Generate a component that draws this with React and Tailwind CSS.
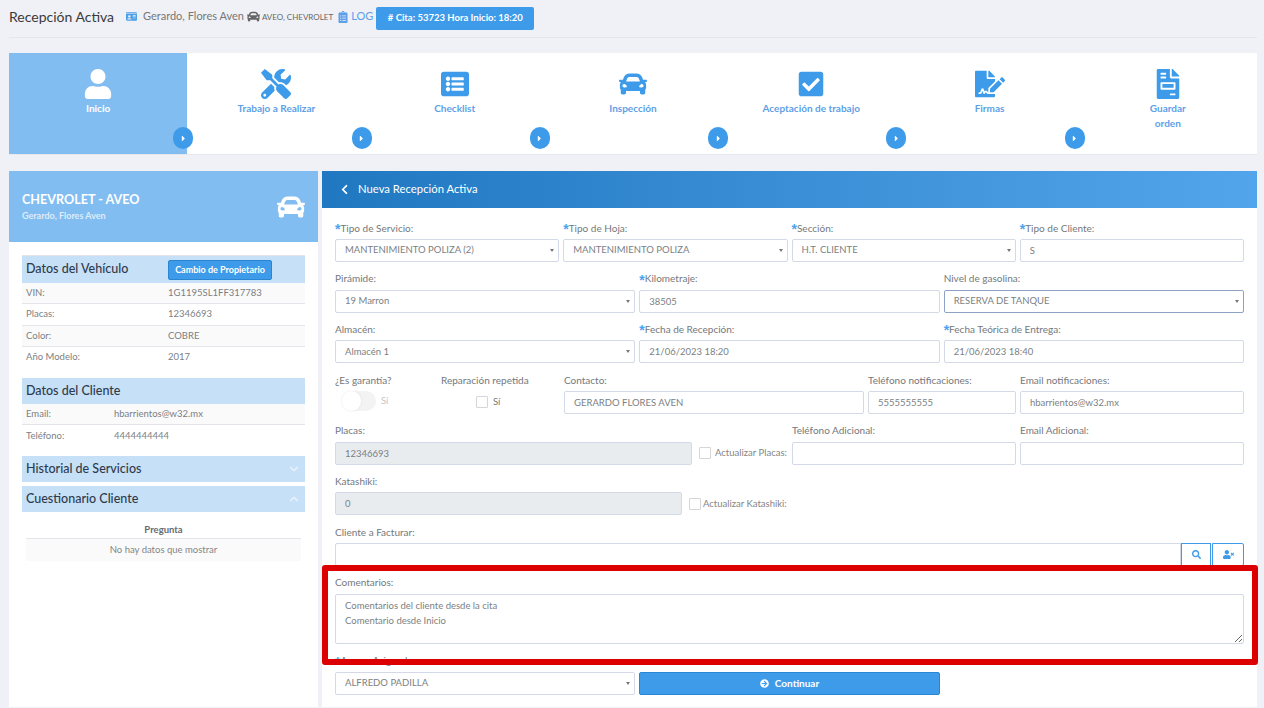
import React from "react";
import {
  FaUser, FaTools, FaListAlt, FaCar, FaCheckSquare, FaFileSignature, FaFileInvoice,
  FaCaretRight, FaChevronLeft, FaChevronDown, FaChevronUp, FaSearch, FaUserTimes,
  FaArrowCircleRight, FaIdCard, FaClipboardList,
} from "react-icons/fa";

const steps = [
  { label: "Inicio", icon: <FaUser size={30} />, active: true },
  { label: "Trabajo a Realizar", icon: <FaTools size={30} /> },
  { label: "Checklist", icon: <FaListAlt size={28} /> },
  { label: "Inspección", icon: <FaCar size={28} /> },
  { label: "Aceptación de trabajo", icon: <FaCheckSquare size={28} /> },
  { label: "Firmas", icon: <FaFileSignature size={30} /> },
  { label: "Guardar orden", icon: <FaFileInvoice size={30} />, last: true },
];

function Step({ s }) {
  return (
    <div className={`relative flex-1 flex flex-col items-center pt-4 ${s.active ? "bg-[#82bdf1] text-white" : "bg-white text-[#3d9be9]"}`}>
      <div className="h-[30px] flex items-center justify-center">{s.icon}</div>
      <div className={`mt-[2px] text-center text-[10px] leading-[15px] font-bold ${s.active ? "text-white" : "text-[#5d9fe8]"} ${s.last ? "w-[50px]" : ""}`}>{s.label}</div>
      {!s.last && (
        <div className="absolute z-10 right-[-6px] top-[74px] w-5 h-[22px] rounded-full bg-[#3d9be9] flex items-center justify-center text-white">
          <FaCaretRight size={9} />
        </div>
      )}
    </div>
  );
}

function Label({ req, children }) {
  return (
    <div className="h-[14px] mb-1 flex items-center text-[10px] text-[#74787d] whitespace-nowrap">
      {req && <span className="font-['Liberation_Sans',sans-serif] text-[#4ba3f0] text-[14px] leading-none h-[12px] font-bold">*</span>}
      {children}
    </div>
  );
}

function Input({ value = "", disabled }) {
  return (
    <input
      readOnly
      value={value}
      className={`block w-full h-[23px] rounded-[2px] border border-[#d3d9e6] px-[9px] text-[9.5px] text-[#7b7f84] outline-none ${disabled ? "bg-[#e9ecef]" : "bg-white"}`}
    />
  );
}

function Select({ value, focus }) {
  return (
    <div className={`w-full h-[23px] rounded-[2px] border ${focus ? "border-[#8ea2c6]" : "border-[#d3d9e6]"} bg-white pl-[9px] pr-[4px] flex items-center justify-between text-[9.5px] text-[#7b7f84]`}>
      <span>{value}</span>
      <span className="w-0 h-0 border-x-[2.5px] border-x-transparent border-t-[3px] border-t-[#777]" />
    </div>
  );
}

function Field({ label, req, children, className = "" }) {
  return (
    <div className={className}>
      <Label req={req}>{label}</Label>
      {children}
    </div>
  );
}

function Box() {
  return <span className="block w-[12px] h-[12px] border border-[#d6d6d6] bg-white rounded-[1px] shrink-0" />;
}

function SectionHead({ children, right, className = "" }) {
  return (
    <div className={`bg-[#c5e0f7] flex items-center pl-1 text-[12.5px] text-[#2f3a4c] ${className}`}>
      <span className="font-medium">{children}</span>
      {right}
    </div>
  );
}

function DataRow({ k, v, valueClass, shaded, noBorder }) {
  return (
    <div className={`h-[21.3px] flex items-center pl-1 text-[9.5px] text-[#7b7f84] ${shaded ? "bg-[#fafafa]" : "bg-white"} ${noBorder ? "" : "border-b border-[#e3e5ea]"}`}>
      <span className={valueClass}>{k}</span>
      <span>{v}</span>
    </div>
  );
}

export default function App() {
  return (
    <div className="relative w-[1264px] h-[708px] overflow-hidden bg-[#f0f1f6] pl-[9px] pr-[7px] font-['Lato','Noto_Sans',sans-serif]">
      {/* Page heading */}
      <div className="h-[38px] border-b border-[#e3e6ee] flex items-center pb-[4px]">
        <span className="text-[14px] text-[#3a3a3a] w-[117px]">Recepción Activa</span>
        <FaIdCard size={11} className="text-[#4f9fe6]" />
        <span className="ml-[6px] text-[11px] text-[#777]">Gerardo, Flores Aven</span>
        <FaCar size={13} className="ml-[3px] text-[#666]" />
        <span className="ml-[2px] text-[8px] text-[#666]">AVEO, CHEVROLET</span>
        <FaClipboardList size={12} className="ml-[4px] text-[#5d9fe8]" />
        <span className="ml-[2px] text-[11px] text-[#5d9fe8]">LOG</span>
        <span className="ml-[3px] mt-1 h-[23px] w-[158px] rounded-[2px] bg-[#3d9be9] text-white text-[9.5px] font-bold flex items-center justify-center">
          # Cita: 53723 Hora Inicio: 18:20
        </span>
      </div>

      {/* Wizard */}
      <div className="mt-[15px] h-[102px] flex border-b border-[#e6e8ee]">
        {steps.map((s) => <Step key={s.label} s={s} />)}
      </div>

      {/* Content */}
      <div className="mt-4 flex gap-1 h-[536px]">
        {/* Left card */}
        <div className="w-[309px] shrink-0 bg-white">
          <div className="h-[71px] bg-[#82bdf1] flex items-center justify-between px-[13px] text-white">
            <div>
              <div className="text-[12.6px] font-bold leading-4">CHEVROLET - AVEO</div>
              <div className="text-[9px] font-bold leading-3 mt-[2px] text-[#dcecfb]">Gerardo, Flores Aven</div>
            </div>
            <FaCar size={28} />
          </div>
          <div className="px-[13px] pt-[13px]">
            <SectionHead
              className="h-[28px] border-t border-[#e3e5ea]"
              right={
                <span className="ml-[36px] w-[104px] h-[20px] rounded-[2px] bg-[#3d9be9] border border-[#2a85d3] text-white text-[9px] font-bold flex items-center justify-center">
                  Cambio de Propietario
                </span>
              }
            >
              <span className="inline-block w-[106px]">Datos del Vehículo</span>
            </SectionHead>
            <DataRow shaded k="VIN:" v="1G1195SL1FF317783" valueClass="w-[142px]" />
            <DataRow k="Placas:" v="12346693" valueClass="w-[142px]" />
            <DataRow shaded k="Color:" v="COBRE" valueClass="w-[142px]" />
            <DataRow noBorder k="Año Modelo:" v="2017" valueClass="w-[142px]" />

            <SectionHead className="h-[26px] mt-[10px]">Datos del Cliente</SectionHead>
            <DataRow shaded k="Email:" v="hbarrientos@w32.mx" valueClass="w-[88px]" />
            <DataRow noBorder k="Teléfono:" v="4444444444" valueClass="w-[88px]" />

            <SectionHead
              className="h-[26px] mt-[9.4px] justify-between pr-[6px]"
              right={<FaChevronDown size={10} className="text-[#e4f1fc]" />}
            >
              Historial de Servicios
            </SectionHead>
            <SectionHead
              className="h-[26px] mt-1 justify-between pr-[6px]"
              right={<FaChevronUp size={10} className="text-[#e4f1fc]" />}
            >
              Cuestionario Cliente
            </SectionHead>

            <div className="mx-1 mt-[11px]">
              <div className="h-[16px] border-b border-[#e3e5ea] text-center text-[9.5px] font-bold text-[#666b70] leading-[13px]">Pregunta</div>
              <div className="h-[22px] bg-[#fafafa] flex items-center justify-center text-[9.5px] text-[#858585]">No hay datos que mostrar</div>
            </div>
          </div>
        </div>

        {/* Right card */}
        <div className="flex-1 min-w-0 bg-white">
          <div className="h-[37px] flex items-center pl-[17px] gap-2 text-white text-[11.3px] bg-gradient-to-r from-[#1f78c1] to-[#52a5ea]">
            <FaChevronLeft size={11} />
            <span>Nueva Recepción Activa</span>
          </div>

          <div className="px-[13px] pt-[13px] flex flex-col gap-y-[9.7px]">
            <div className="grid grid-cols-4 gap-x-1">
              <Field req label="Tipo de Servicio:"><Select value="MANTENIMIENTO POLIZA (2)" /></Field>
              <Field req label="Tipo de Hoja:"><Select value="MANTENIMIENTO POLIZA" /></Field>
              <Field req label="Sección:"><Select value="H.T. CLIENTE" /></Field>
              <Field req label="Tipo de Cliente:"><Input value="S" /></Field>
            </div>
            <div className="grid grid-cols-3 gap-x-1">
              <Field label="Pirámide:"><Select value="19 Marron" /></Field>
              <Field req label="Kilometraje:"><Input value="38505" /></Field>
              <Field label="Nivel de gasolina:"><Select focus value="RESERVA DE TANQUE" /></Field>
            </div>
            <div className="grid grid-cols-3 gap-x-1">
              <Field label="Almacén:"><Select value="Almacén 1" /></Field>
              <Field req label="Fecha de Recepción:"><Input value="21/06/2023 18:20" /></Field>
              <Field req label="Fecha Teórica de Entrega:"><Input value="21/06/2023 18:40" /></Field>
            </div>

            <div className="flex">
              <Field label="¿Es garantía?" className="w-[106px]">
                <div className="flex items-center h-[20px] pl-[7px]">
                  <span className="relative block w-[34px] h-[20px] rounded-full bg-[#f3f3f3]">
                    <span className="absolute left-0 top-0 w-[19px] h-[20px] rounded-full bg-white shadow-[0_0_3px_rgba(0,0,0,0.08)]" />
                  </span>
                  <span className="ml-[5px] text-[9.5px] text-[#c4c4c4]">Sí</span>
                </div>
              </Field>
              <Field label="Reparación repetida" className="w-[123px]">
                <div className="flex items-center h-[22px] pl-[35px] gap-[5px] text-[9.5px] text-[#777]">
                  <Box />
                  <span>Sí</span>
                </div>
              </Field>
              <Field label="Contacto:" className="w-[300px]"><Input value="GERARDO FLORES AVEN" /></Field>
              <Field label="Teléfono notificaciones:" className="ml-1 w-[148px]"><Input value="5555555555" /></Field>
              <Field label="Email notificaciones:" className="ml-1 w-[224px]"><Input value="hbarrientos@w32.mx" /></Field>
            </div>

            <div className="flex">
              <Field label="Placas:" className="w-[357px]"><Input disabled value="12346693" /></Field>
              <div className="w-[100px] pt-[18px] pl-[7px]">
                <div className="h-[23px] flex items-center gap-1 text-[9.5px] text-[#858585] whitespace-nowrap">
                  <Box />
                  <span>Actualizar Placas:</span>
                </div>
              </div>
              <Field label="Teléfono Adicional:" className="w-[224px]"><Input /></Field>
              <Field label="Email Adicional:" className="ml-1 w-[224px]"><Input /></Field>
            </div>

            <div className="flex">
              <Field label="Katashiki:" className="w-[347px]"><Input disabled value="0" /></Field>
              <div className="pt-[18px] pl-[7px]">
                <div className="h-[23px] flex items-center gap-[2px] text-[9.5px] text-[#858585] whitespace-nowrap">
                  <Box />
                  <span>Actualizar Katashiki:</span>
                </div>
              </div>
            </div>

            <Field label="Cliente a Facturar:">
              <div className="flex">
                <input readOnly className="block flex-1 min-w-0 h-[23px] border border-[#d3d9e6] rounded-l-[2px] outline-none" />
                <span className="w-[30px] h-[23px] border border-[#3d9be9] text-[#3d9be9] flex items-center justify-center">
                  <FaSearch size={9} />
                </span>
                <span className="ml-px w-[32px] h-[23px] border border-[#3d9be9] rounded-r-[2px] text-[#3d9be9] flex items-center justify-center">
                  <FaUserTimes size={11} />
                </span>
              </div>
            </Field>

            <Field label="Comentarios:">
              <textarea
                readOnly
                defaultValue={"Comentarios del cliente desde la cita\nComentario desde Inicio"}
                className="block w-full h-[50px] rounded-[2px] border border-[#d3d9e6] px-[9px] py-[3px] text-[9.5px] leading-[15px] text-[#7b7f84] outline-none"
              />
            </Field>

            <div className="grid grid-cols-3 gap-x-1">
              <Field req label="Asesor Asignado:"><Select value="ALFREDO PADILLA" /></Field>
              <div className="pt-[18px]">
                <button className="w-full h-[23px] rounded-[2px] bg-[#3d9be9] border border-[#2a85d3] text-white text-[10px] font-bold flex items-center justify-center gap-[6px]">
                  <FaArrowCircleRight size={9} />
                  Continuar
                </button>
              </div>
            </div>
          </div>
        </div>
      </div>

      {/* Annotation */}
      <div className="absolute left-[322px] top-[565px] w-[936px] h-[100px] border-[6px] border-[#dc0000] rounded-[3px] pointer-events-none" />
    </div>
  );
}
